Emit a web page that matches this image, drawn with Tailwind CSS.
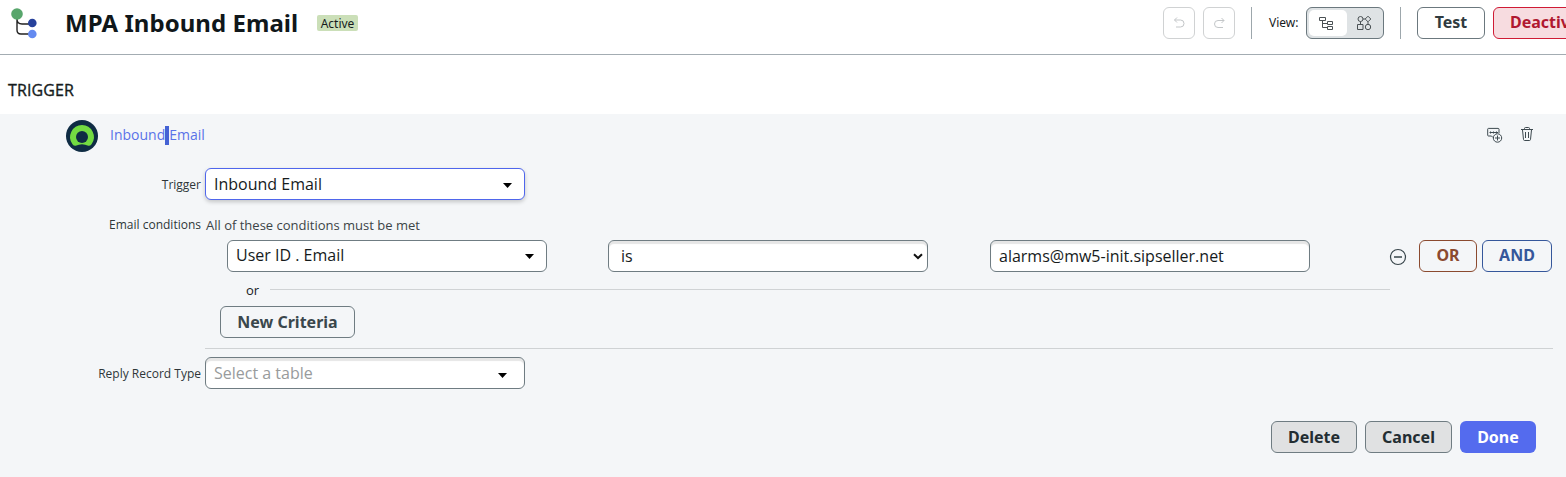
<!DOCTYPE html>
<html lang="en">
<head>
<meta charset="utf-8">
<title>MPA Inbound Email</title>
<script src="https://cdn.jsdelivr.net/npm/@tailwindcss/browser@4"></script>
</head>
<body class="w-[1566px] h-[477px] overflow-hidden bg-white font-['Open_Sans',sans-serif] text-[#161b1c]">
<header class="flex h-[55px] border-b border-[#a3acb2] pl-[10px] pt-[7px] whitespace-nowrap font-['Noto_Sans',sans-serif]">
  <svg class="w-8 h-8 shrink-0" viewBox="0 0 32 32" fill="none">
    <path d="M7 12v11q0 4 4 4h9M7 12q0 5 5 5h8" stroke="#222" stroke-width="1.4"/>
    <circle cx="7" cy="7" r="5.8" fill="#58a66c"/><circle cx="22.300" cy="16" r="4.300" fill="#27419b"/><circle cx="22.300" cy="27" r="4.300" fill="#648af0"/>
  </svg>
  <h1 class="ml-[23px] w-[233px] shrink-0 text-2xl leading-8 font-bold tracking-[0.05px] text-[#10171a]">MPA Inbound Email</h1>
  <span class="ml-[19px] mt-2 h-4 w-[41px] shrink-0 rounded-[2px] bg-[#cbdfb8] text-center text-xs leading-[17px]">Active</span>
  <div class="ml-[805px] flex shrink-0 gap-2">
    <button class="flex h-8 w-8 items-center justify-center rounded-md border border-[#d0d2d3]"><svg class="w-4 h-4" viewBox="0 0 16 16" fill="none" stroke="#c3c6c8"><path d="M6 2.500L3.500 5L6 7.500M3.500 5H9.500a3.500 3.500 0 0 1 0 7H5"/></svg></button>
    <button class="flex h-8 w-8 items-center justify-center rounded-md border border-[#d0d2d3]"><svg class="w-4 h-4" viewBox="0 0 16 16" fill="none" stroke="#c3c6c8"><path d="M10.500 3L13 5.500L10.500 8M13 5.500H7a3.500 3.500 0 0 0 0 7H12"/></svg></button>
  </div>
  <div class="ml-4 h-8 w-px shrink-0 bg-[#9da7ac]"></div>
  <span class="ml-[17px] w-[30px] shrink-0 text-xs leading-8">View:</span>
  <div class="ml-[7px] flex h-8 w-[78px] shrink-0 rounded-md border border-[#6b787e] bg-[#dfe3e5] p-[2px]">
    <span class="flex h-[26px] w-[38px] items-center justify-center rounded-[5px] bg-white"><svg class="w-4 h-4 -ml-1" viewBox="0 0 16 16" fill="none" stroke="#4a5154"><path d="M1.500 2.500h6v3h-6zM9.500 6.500h5v3h-5zM9.500 11.500h5v3h-5zM4.500 5.500v7h5M4.500 8.500h5"/></svg></span>
    <span class="flex h-[26px] flex-1 items-center justify-center"><svg class="w-4 h-4 -ml-px" viewBox="0 0 16 16" fill="none" stroke="#4a5154"><circle cx="4.500" cy="4" r="2.500"/><path d="M12 1.200l2.800 2.800l-2.800 2.800l-2.800-2.800zM7 4h2.200M4.500 6.500v3M12 6.800v2.500M1.500 9.500h5.500v5h-5.500z"/><circle cx="12" cy="12" r="2.700"/></svg></span>
  </div>
  <div class="ml-4 h-8 w-px shrink-0 bg-[#9da7ac]"></div>
  <button class="ml-4 h-8 w-[68px] shrink-0 rounded-md border border-[#6b787e] text-base leading-[29px] pb-px font-bold text-[#303b40]">Test</button>
  <button class="ml-2 h-8 w-[120px] shrink-0 rounded-md border border-[#cf1b35] bg-[#f7dce0] pl-4 text-left text-base leading-[29px] pb-px font-bold text-[#b01830]">Deactivate</button>
</header>
<h2 class="h-[59px] pl-2 pt-[23px] text-base leading-6 font-medium tracking-[0.1px] [-webkit-text-stroke:0.35px_#161b1c]">TRIGGER</h2>
<main class="h-[363px] bg-[#f4f6f8] pt-[6px]">
  <div class="flex h-8 pl-[66px]">
    <svg class="h-8 w-8" viewBox="0 0 32 32"><circle cx="16" cy="16" r="16" fill="#0f2c44"/><path d="M16 5a12 12 0 0 0-9.500 19.200q1.200 1.700 3.200 1.500q6.300-3 12.600 0q2 .2 3.200-1.500A12 12 0 0 0 16 5" fill="#73db42"/><circle cx="16" cy="17" r="6" fill="#0f2c44"/></svg>
    <a class="ml-3 h-[30px] w-[94px] whitespace-nowrap text-sm leading-[30px] text-[#5a72e8]">Inbound<span class="-mt-[2px] inline-block h-[19px] w-1 bg-[#4562d4] align-middle"></span>Email</a>
    <svg class="ml-[1282px] mt-[6px] h-[18px] w-[18px]" viewBox="0 0 18 18" fill="none" stroke="#3e4a50"><path d="M8 11.500H7l-1.500-1.500H2.500q-.8 0-.8-.8v-6q0-.8.8-.8h9.500q1 0 1 .8v4M4.500 7.500v-2M7.500 7.500v-2M10.500 7.500v-2M3.500 6.500h8.500"/><circle cx="11.500" cy="12" r="4.200"/><path d="M11.500 9.500v5M9 12h5"/></svg>
    <svg class="ml-[15px] mt-[6px] h-4 w-4" viewBox="0 0 16 16" fill="none" stroke="#3e4a50"><path d="M2 3.500h12M5.500 3.500v-1q0-1 1-1h3q1 0 1 1v1M3.500 4l1 9.500q.2 1 1 1h5q.8 0 1-1l1-9.500M6.500 6v6M9.500 6v6"/></svg>
  </div>
  <div class="mt-4 flex h-8">
    <label class="w-[201px] text-right text-xs leading-[34px] text-[#2e3639]">Trigger</label>
    <div class="ml-1 flex h-8 w-80 items-center justify-between rounded-md border border-[#4f66ec] bg-white pl-2 pr-3 text-base leading-[30px] shadow-[0_2px_4px_#0003]">Inbound Email<svg class="mt-[3px] h-[5px] w-[9px]" viewBox="0 0 9 5"><path d="M0 0h9L4.500 5z"/></svg></div>
  </div>
  <div class="mt-4 flex h-[18px] leading-[18px]">
    <label class="w-[201px] text-right text-xs leading-[18px] text-[#2e3639]">Email conditions</label>
    <span class="ml-[5px] text-[13px] leading-[19px] text-[#3c4447]">All of these conditions must be met</span>
  </div>
  <div class="mt-[6px] flex h-8 pl-[227px]">
    <div class="flex h-8 w-80 items-center justify-between rounded-md border border-[#6f7c82] bg-white pl-2 pr-3 text-base leading-[28px] pb-[2px]">User ID . Email<svg class="mt-[3px] h-[5px] w-[9px]" viewBox="0 0 9 5"><path d="M0 0h9L4.500 5z"/></svg></div>
    <div class="ml-[61px] flex h-8 w-80 items-center justify-between rounded-md border border-[#6f7c82] bg-white pl-3 pr-1 text-base leading-[30px] shadow-[inset_0_3px_1px_#e6e6e6]">is<svg class="h-[7px] w-[10px]" viewBox="0 0 10 7" fill="none"><path d="M1 1.200L5 5L9 1.200" stroke="#111" stroke-width="2"/></svg></div>
    <div class="ml-[62px] h-8 w-80 rounded-md border border-[#6f7c82] bg-white pl-2 text-base leading-[30px] shadow-[inset_0_3px_1px_#e6e6e6]">alarms@mw5-init.sipseller.net</div>
    <svg class="ml-[79px] mt-2 h-[18px] w-[18px]" viewBox="0 0 18 18" fill="none" stroke="#37444a"><circle cx="9" cy="9" r="7.500" stroke-width="1.200"/><path d="M5 9h8" stroke-width="1.500"/></svg>
    <button class="ml-[12px] h-8 w-[58px] rounded-md border border-[#8b4a2f] pb-px text-base leading-[29px] font-['Noto_Sans',sans-serif] font-bold text-[#8b4a2f]">OR</button>
    <button class="ml-[5px] h-8 w-[70px] rounded-md border border-[#35579b] pb-px text-base leading-[29px] font-['Noto_Sans',sans-serif] font-bold text-[#35579b]">AND</button>
  </div>
  <div class="flex h-[34px] items-center pl-[246px] text-[13px]"><span class="mt-1 w-6">or</span><div class="h-px w-[1120px] bg-[#d0d3d5]"></div></div>
  <button class="ml-[220px] block h-8 w-[135px] rounded-md border border-[#6f7c82] text-base leading-[30px] font-['Noto_Sans',sans-serif] font-bold text-[#3a474c]">New Criteria</button>
  <div class="ml-[205px] mt-[10px] h-px w-[1348px] bg-[#cfd2d4]"></div>
  <div class="mt-2 flex h-8">
    <label class="w-[201px] text-right text-xs leading-[34px] text-[#2e3639]">Reply Record Type</label>
    <div class="ml-1 flex h-8 w-80 items-center justify-between rounded-md border border-[#6f7c82] bg-white pl-2 pr-[17px] text-base leading-[30px] text-[#989b9c] shadow-[inset_0_3px_1px_#e6e6e6]">Select a table<svg class="mt-[5px] h-[5px] w-[9px]" viewBox="0 0 9 5"><path d="M0 0h9L4.500 5z"/></svg></div>
  </div>
  <div class="mt-8 flex gap-2 pl-[1271px] text-base font-['Noto_Sans',sans-serif] font-bold text-[#232d32]">
    <button class="h-8 w-[86px] rounded-md border border-[#6f7c82] bg-[#e0e1e2] leading-[30px]">Delete</button>
    <button class="h-8 w-[87px] rounded-md border border-[#6f7c82] bg-[#e0e1e2] leading-[30px]">Cancel</button>
    <button class="h-8 w-[76px] rounded-md bg-[#546bee] leading-8 text-white">Done</button>
  </div>
</main>
</body>
</html>
